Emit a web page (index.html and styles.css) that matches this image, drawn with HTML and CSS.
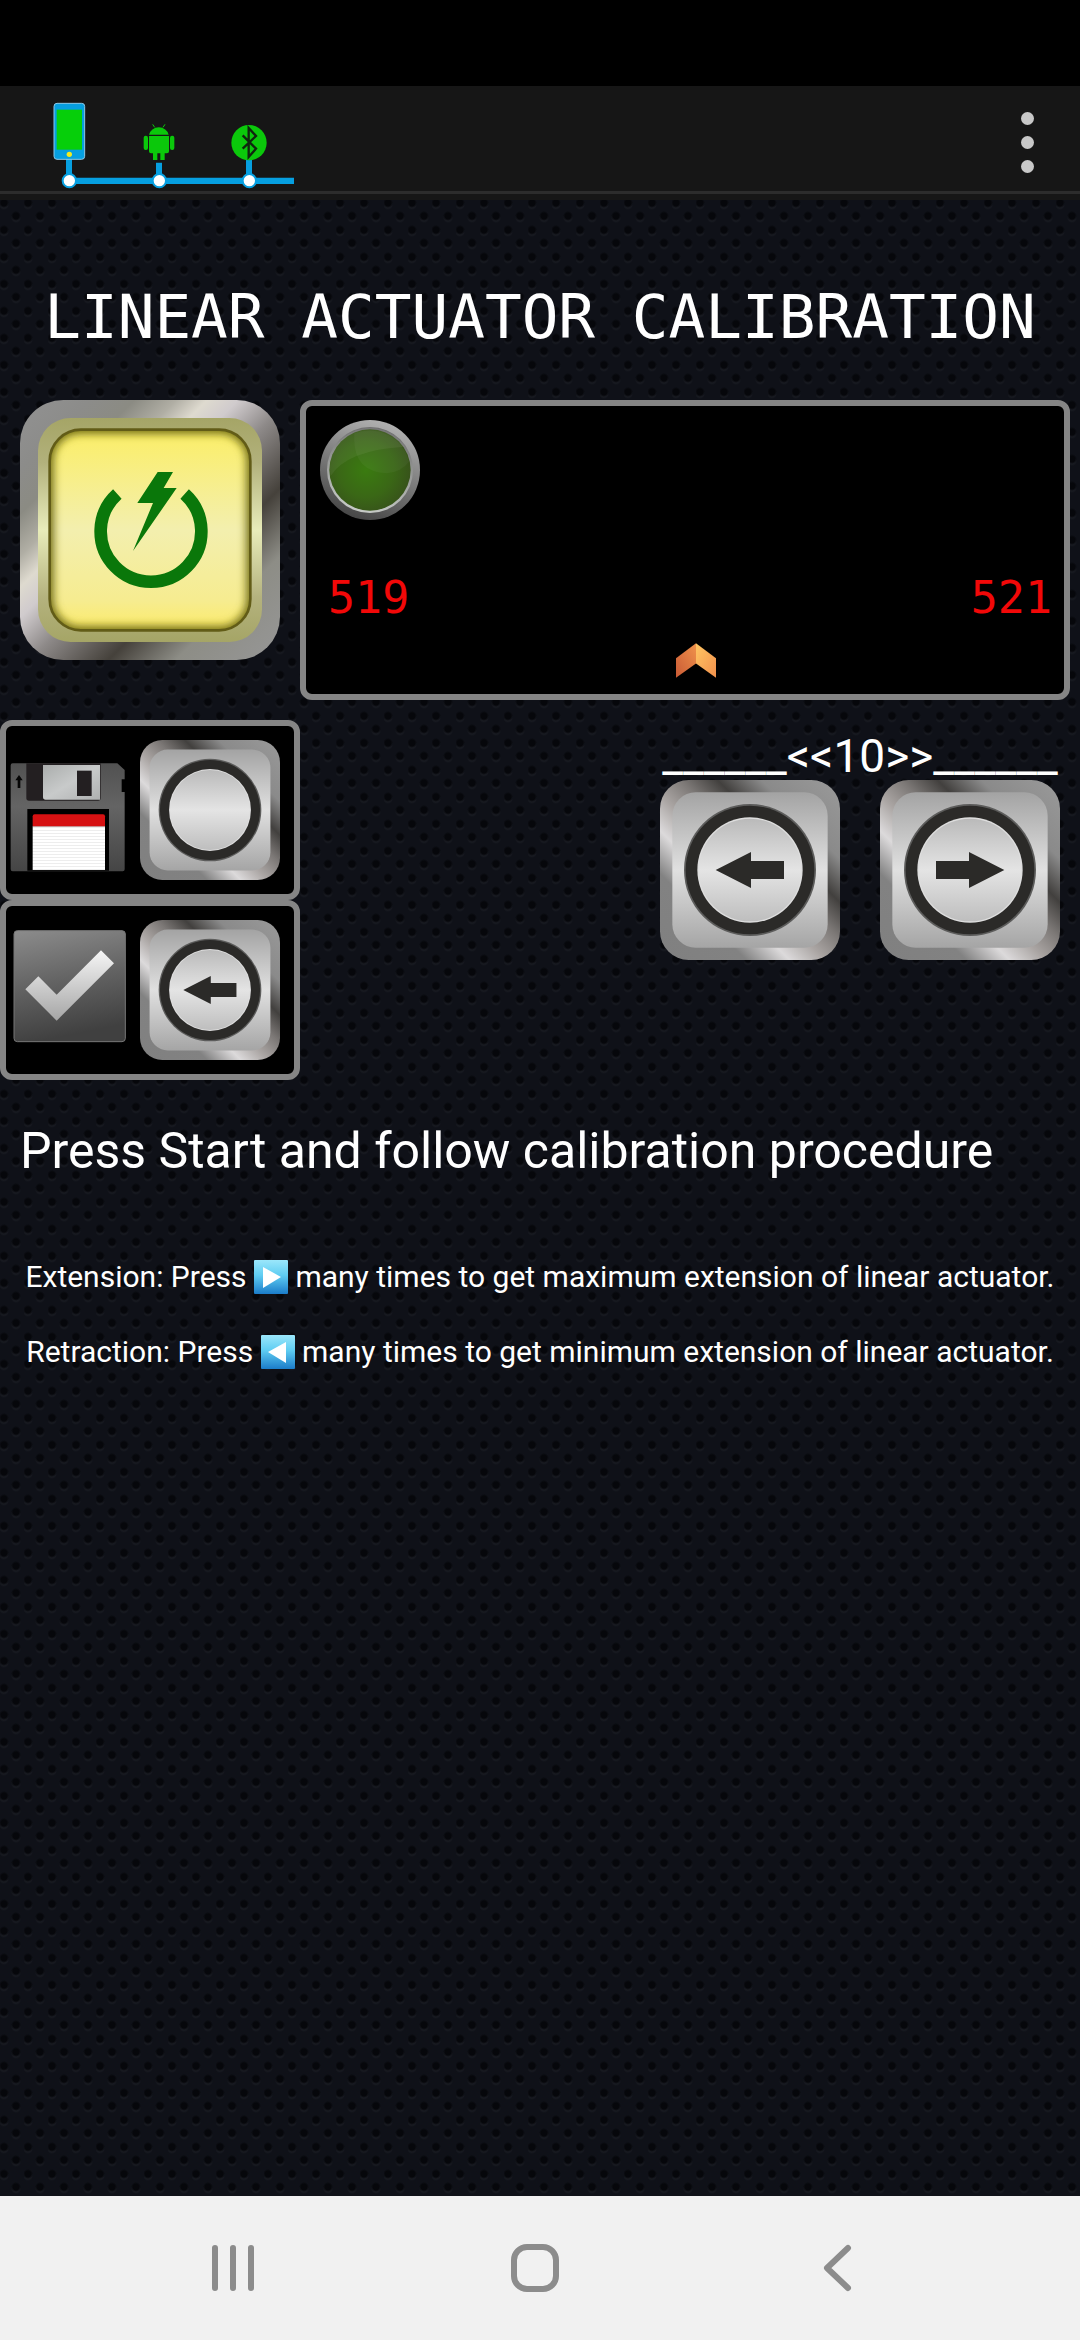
FILE: index.html
```html
<!DOCTYPE html>
<html lang="en">
<head>
<meta charset="utf-8">
<meta name="viewport" content="width=device-width, initial-scale=1">
<title>Linear Actuator Calibration</title>
<link rel="stylesheet" href="styles.css">
</head>
<body>
<svg class="defs" width="0" height="0" aria-hidden="true">
  <defs>
    <linearGradient id="bezel" x1="0" y1="1" x2="1" y2="0">
      <stop offset="0" stop-color="#808080"/><stop offset=".24" stop-color="#828282"/>
      <stop offset=".36" stop-color="#dcdadb"/><stop offset=".46" stop-color="#aaa5a3"/>
      <stop offset=".56" stop-color="#7c7876"/><stop offset=".66" stop-color="#42403e"/>
      <stop offset=".78" stop-color="#8a8a8a"/><stop offset="1" stop-color="#9a9a9a"/>
    </linearGradient>
    <linearGradient id="plate" x1="0" y1="0" x2="0" y2="1">
      <stop offset="0" stop-color="#a3a3a3"/><stop offset=".5" stop-color="#e0e0e0"/><stop offset="1" stop-color="#a5a5a5"/>
    </linearGradient>
    <linearGradient id="disc" x1="0" y1="0" x2="0" y2="1">
      <stop offset="0" stop-color="#bababa"/><stop offset=".5" stop-color="#e4e4e4"/><stop offset="1" stop-color="#bebebe"/>
    </linearGradient>
    <symbol id="cap" viewBox="0 0 540 540">
      <rect width="540" height="540" rx="86" fill="url(#bezel)"/>
      <rect x="37" y="37" width="466" height="466" rx="70" fill="url(#plate)"/>
      <circle cx="270" cy="270" r="198" fill="#5c5c5b"/>
      <circle cx="270" cy="270" r="193" fill="#2b2a28"/>
      <circle cx="270" cy="270" r="158" fill="#dedede"/>
      <circle cx="270" cy="270" r="154" fill="url(#disc)"/>
    </symbol>
    <symbol id="arrow" viewBox="0 0 540 540">
      <path d="M167 270 273 216V243H372V297H273V324Z" fill="#2b2a28"/>
    </symbol>
    <linearGradient id="emoji" x1="0" y1="0" x2="0" y2="1">
      <stop offset="0" stop-color="#9be7fb"/><stop offset=".45" stop-color="#5fcdf2"/><stop offset="1" stop-color="#1b7cc9"/>
    </linearGradient>
  </defs>
</svg>

<div class="screen">
  <div class="status"></div>
  <header class="bar">
    <svg class="link" viewBox="0 0 960 315" role="img" aria-label="Phone connected over Bluetooth">
      <g transform="translate(0 -18)">
        <path d="M207 293H882V312H207ZM198 236H216V290H198ZM468 248H486V290H468ZM738 236H756V290H738Z" fill="#069fe0"/>
        <g fill="#fff" stroke="#069fe0" stroke-width="6"><circle cx="208" cy="302" r="20"/><circle cx="478" cy="302" r="20"/><circle cx="748" cy="302" r="20"/></g>
        <rect x="162" y="70" width="92" height="168" rx="9" fill="#069fe0" stroke="#8cc9e8" stroke-width="3"/>
        <rect x="170" y="89" width="76" height="120" fill="#06cf0a"/><circle cx="208" cy="223" r="8" fill="#f4ec1e"/>
        <g fill="#0bc80b">
          <path d="M447 164A30 27 0 0 1 506 164ZM447 168H507V214Q507 220 501 220H494V240H481V220H472V240H459V220H453Q447 220 447 214Z"/>
          <rect x="431" y="167" width="13" height="43" rx="6"/><rect x="510" y="167" width="13" height="43" rx="6"/>
          <path d="M458 133 464 142M495 133 489 142" stroke="#0bc80b" stroke-width="3"/>
        </g>
        <circle cx="747" cy="188" r="53" fill="#0bc80b"/>
        <path d="M728 166 768 206 746 231V144L768 168 728 206" fill="none" stroke="#10250f" stroke-width="7"/>
      </g>
    </svg>
    <button class="menu" type="button" aria-label="More options"><i></i><i></i><i></i></button>
  </header>

  <main class="body">
    <h1 class="title">LINEAR ACTUATOR CALIBRATION</h1>

    <section class="top">
      <button class="key power" type="button" aria-label="Start">
        <svg viewBox="0 0 780 780">
          <defs>
            <linearGradient id="pb" x1="0" y1="0" x2="1" y2="1">
              <stop offset="0" stop-color="#929292"/><stop offset=".13" stop-color="#8c8c8a"/><stop offset=".22" stop-color="#8b8b83"/>
              <stop offset=".3" stop-color="#b0aea4"/><stop offset=".36" stop-color="#dedacf"/><stop offset=".42" stop-color="#d0cbcd"/>
              <stop offset=".52" stop-color="#8d8988"/><stop offset=".67" stop-color="#45413b"/><stop offset=".8" stop-color="#8d8d86"/><stop offset="1" stop-color="#979797"/>
            </linearGradient>
            <linearGradient id="pr" x1="0" y1="0" x2="0" y2="1">
              <stop offset="0" stop-color="#a5a566"/><stop offset=".2" stop-color="#b2b17c"/><stop offset=".5" stop-color="#e8ecba"/><stop offset=".8" stop-color="#b4b27e"/><stop offset="1" stop-color="#a5a566"/>
            </linearGradient>
            <linearGradient id="pf" x1="0" y1="0" x2="0" y2="1">
              <stop offset="0" stop-color="#fbee66"/><stop offset=".5" stop-color="#f3efae"/><stop offset=".85" stop-color="#f6ec90"/><stop offset="1" stop-color="#fceb68"/>
            </linearGradient>
            <filter id="soft" x="-10%" y="-10%" width="120%" height="120%"><feGaussianBlur stdDeviation="13"/></filter>
            <clipPath id="face"><rect x="88" y="88" width="604" height="604" rx="96"/></clipPath>
          </defs>
          <rect width="780" height="780" rx="130" fill="url(#pb)"/>
          <rect x="54" y="54" width="672" height="672" rx="98" fill="url(#pr)"/>
          <rect x="88" y="88" width="604" height="604" rx="96" fill="url(#pf)"/>
          <g clip-path="url(#face)"><rect x="84" y="84" width="612" height="612" rx="98" fill="none" stroke="#6f6c12" stroke-width="34" filter="url(#soft)"/></g>
          <rect x="89" y="89" width="602" height="602" rx="94" fill="none" stroke="#625c17" stroke-width="8"/>
          <path d="M292 282A151 151 0 1 0 494 282" fill="none" stroke="#0a770a" stroke-width="38"/>
          <path d="M413 216H459L431 264H470L339 453 399 309H352Z" fill="#0a770a"/>
        </svg>
      </button>

      <div class="panel gauge">
        <svg class="led" viewBox="90 90 300 300" role="img" aria-label="Status light off">
          <defs>
            <linearGradient id="l1" x1=".7" y1="0" x2=".35" y2="1"><stop offset="0" stop-color="#b4b4b4"/><stop offset="1" stop-color="#454545"/></linearGradient>
            <linearGradient id="l2" x1=".6" y1="0" x2=".4" y2="1"><stop offset="0" stop-color="#6c6c6c"/><stop offset="1" stop-color="#c8ccc8"/></linearGradient>
            <radialGradient id="l3" cx=".45" cy=".5" r=".56"><stop offset="0" stop-color="#3a7b10"/><stop offset=".6" stop-color="#3a6716"/><stop offset="1" stop-color="#37521a"/></radialGradient>
          </defs>
          <circle cx="240" cy="240" r="150" fill="url(#l1)"/><circle cx="240" cy="240" r="129" fill="url(#l2)"/><circle cx="240" cy="240" r="122" fill="url(#l3)"/>
          <path d="M122 258Q170 180 345 170A122 122 0 0 0 122 258Z" fill="#fff" opacity=".06"/>
          <path d="M193 130Q185 245 290 250Q335 245 357 215A122 122 0 0 0 193 130Z" fill="#fff" opacity=".04"/>
        </svg>
        <div class="readings"><output>519</output><output>521</output></div>
        <svg class="marker" viewBox="0 0 120 104" aria-hidden="true">
          <defs>
            <linearGradient id="m1" x1="1" y1="0" x2="0" y2="1"><stop offset="0" stop-color="#f0924b"/><stop offset="1" stop-color="#c95a35"/></linearGradient>
            <linearGradient id="m2" x1="0" y1="0" x2="1" y2="1"><stop offset="0" stop-color="#ffc663"/><stop offset="1" stop-color="#f2904c"/></linearGradient>
          </defs>
          <path d="M0 45 60 0V61L0 104Z" fill="url(#m1)"/><path d="M60 0 120 45V104L60 61Z" fill="url(#m2)"/>
        </svg>
      </div>
    </section>

    <section class="controls">
      <div class="actions">
        <div class="panel action">
          <svg class="glyph" viewBox="30 90 360 420" role="img" aria-label="Save">
            <defs>
              <linearGradient id="f1" x1="0" y1="0" x2="0" y2="1"><stop offset="0" stop-color="#515151"/><stop offset=".4" stop-color="#646464"/><stop offset="1" stop-color="#454545"/></linearGradient>
              <linearGradient id="f2" x1="0" y1="0" x2="1" y2="1"><stop offset="0" stop-color="#aaadac"/><stop offset=".5" stop-color="#c8caca"/><stop offset="1" stop-color="#aeb0b0"/></linearGradient>
              <pattern id="f3" width="10" height="9" patternUnits="userSpaceOnUse"><rect width="10" height="9" fill="#fff"/><rect width="10" height="2" fill="#e4e4e4"/></pattern>
            </defs>
            <path d="M38 160H352L374 180V208H365V246H374V478Q374 484 368 484H38Q32 484 32 478V166Q32 160 38 160Z" fill="url(#f1)"/>
            <path d="M79 160H302V264Q302 272 294 272H87Q79 272 79 264Z" fill="#231f21"/>
            <path d="M129 165H300V269H137Q129 269 129 261Z" fill="url(#f2)"/>
            <rect x="231" y="182" width="44" height="76" fill="#231f21"/>
            <path d="M82 297H327V482H82Z" fill="#000"/>
            <path d="M98 349H315V480H98Z" fill="url(#f3)"/><path d="M98 349V319Q98 313 104 313H309Q315 313 315 319V349Z" fill="#d61112"/>
            <path d="M57 195 68 211H61V234H53V211H46Z" fill="#050505"/>
          </svg>
          <button class="key small" type="button" aria-label="Save calibration"><svg viewBox="0 0 540 540"><use href="#cap"/></svg></button>
        </div>
        <div class="panel action">
          <svg class="glyph" viewBox="30 630 360 420" role="img" aria-label="Confirm">
            <defs>
              <linearGradient id="c1" x1="0" y1="0" x2=".2" y2="1"><stop offset="0" stop-color="#8c8c8c"/><stop offset=".5" stop-color="#646464"/><stop offset="1" stop-color="#404040"/></linearGradient>
              <linearGradient id="c2" x1="0" y1="0" x2="0" y2="1"><stop offset="0" stop-color="#f6f6f6"/><stop offset="1" stop-color="#a5a5a5"/></linearGradient>
            </defs>
            <rect x="42" y="662" width="334" height="333" rx="10" fill="url(#c1)" stroke="#777" stroke-width="3"/>
            <path d="M76 838 115 799 170 854 303 721 342 760 170 932Z" fill="url(#c2)"/>
          </svg>
          <button class="key small" type="button" aria-label="Confirm step"><svg viewBox="0 0 540 540"><use href="#cap"/><use href="#arrow"/></svg></button>
        </div>
      </div>

      <div class="jog">
        <div class="step">______&lt;&lt;10&gt;&gt;______</div>
        <div class="jog-keys">
          <button class="key large" type="button" aria-label="Retract"><svg viewBox="0 0 540 540"><use href="#cap"/><use href="#arrow"/></svg></button>
          <button class="key large" type="button" aria-label="Extend"><svg viewBox="0 0 540 540"><use href="#cap"/><g transform="translate(540 0) scale(-1 1)"><use href="#arrow"/></g></svg></button>
        </div>
      </div>
    </section>

    <p class="prompt">Press Start and follow calibration procedure</p>
    <p class="hint">Extension: Press <svg class="emoji" viewBox="0 0 34 34" role="img" aria-label="right"><rect width="34" height="34" rx="1" fill="url(#emoji)"/><path d="M9 7V28L27 17Z" fill="#fff"/></svg> many times to get maximum extension of linear actuator.</p>
    <p class="hint">Retraction: Press <svg class="emoji" viewBox="0 0 34 34" role="img" aria-label="left"><rect width="34" height="34" rx="1" fill="url(#emoji)"/><path d="M25 7V28L7 17Z" fill="#fff"/></svg> many times to get minimum extension of linear actuator.</p>
  </main>

  <nav class="nav">
    <button type="button" aria-label="Recent apps"><svg viewBox="0 0 48 48"><path d="M6 4V44M24 4V44M42 4V44"/></svg></button>
    <button type="button" aria-label="Home"><svg viewBox="0 0 48 48"><rect x="3" y="3" width="42" height="42" rx="13"/></svg></button>
    <button type="button" aria-label="Back"><svg viewBox="0 0 48 48"><path d="M35 4 14 24 35 44"/></svg></button>
  </nav>
</div>
</body>
</html>
```
FILE: styles.css
```css
* { box-sizing: border-box; margin: 0; }
body {
  font-family: Roboto, "Noto Sans", sans-serif;
  color: #fff;
  background: #000;
}
button { padding: 0; border: 0; background: none; cursor: pointer; }
svg { display: block; }
.defs { position: absolute; }

.screen { min-height: 100vh; display: flex; flex-direction: column; }
.status { height: 86px; background: #000; }
.bar {
  display: flex;
  justify-content: space-between;
  align-items: center;
  background: #161616;
  border-bottom: 3px solid #2c2c2c;
}
.link { width: 320px; height: 105px; }
.menu {
  width: 105px;
  height: 105px;
  padding-top: 8px;
  display: flex;
  flex-direction: column;
  align-items: center;
  justify-content: center;
  gap: 11px;
}
.menu i { width: 13px; height: 13px; border-radius: 50%; background: #c8c8c8; }

.body {
  flex: 1;
  border-top: 6px solid #161616;
  background-color: #0f1118;
  background-image:
    radial-gradient(circle at 4px 7px, #06070b 3px, transparent 5px),
    radial-gradient(circle at 16px 20px, #06070b 3px, transparent 5px),
    radial-gradient(circle at 4px 9px, #191b22 3px, transparent 5px),
    radial-gradient(circle at 16px 22px, #191b22 3px, transparent 5px);
  background-size: 24px 27px;
  background-position: 0 -4px;
}
.title {
  height: 200px;
  padding-top: 17px;
  font: 400 61px/200px "DejaVu Sans Mono", monospace;
  text-align: center;
  white-space: nowrap;
}

.key svg { width: 100%; height: 100%; }
.power { width: 260px; height: 260px; flex: none; }
.small { width: 140px; height: 140px; }
.large { width: 180px; height: 180px; }

.panel { background: #000; border: 6px solid #858585; border-radius: 12px; }
.top { display: flex; gap: 20px; padding: 0 10px 0 20px; }
.gauge {
  flex: 1;
  height: 300px;
  padding: 14px 12px 16px 14px;
  display: flex;
  flex-direction: column;
  justify-content: space-between;
}
.led { width: 100px; height: 100px; }
.readings {
  display: flex;
  justify-content: space-between;
  padding: 32px 0 0 8px;
  font: 400 45px/64px "DejaVu Sans Mono", monospace;
  color: #f20808;
}
.marker { width: 40px; height: 35px; align-self: center; margin-left: 20px; }

.controls { display: flex; justify-content: space-between; margin-top: 20px; padding-right: 20px; }
.actions { width: 300px; }
.action { height: 180px; padding: 0 4px; display: flex; align-items: center; gap: 10px; }
.glyph { width: 120px; height: 140px; }
.jog { width: 400px; }
.step { height: 60px; padding-top: 9px; font-size: 46px; line-height: 54px; text-align: center; white-space: nowrap; }
.jog-keys { display: flex; justify-content: space-between; }

.prompt { margin: 36px 20px 0; font-size: 50px; line-height: 70px; }
.hint { font-size: 30px; line-height: 75px; text-align: center; white-space: nowrap; }
.prompt + .hint { margin-top: 53px; }
.emoji { display: inline-block; width: 34px; height: 34px; vertical-align: -7px; }

.nav {
  height: 144px;
  padding: 0 92px 0 82px;
  display: grid;
  grid-template-columns: repeat(3, 1fr);
  background: #f1f1f1;
}
.nav button { display: grid; place-items: center; }
.nav svg {
  width: 48px;
  height: 48px;
  fill: none;
  stroke: #8c8c8c;
  stroke-width: 6;
  stroke-linecap: round;
  stroke-linejoin: round;
}
```
